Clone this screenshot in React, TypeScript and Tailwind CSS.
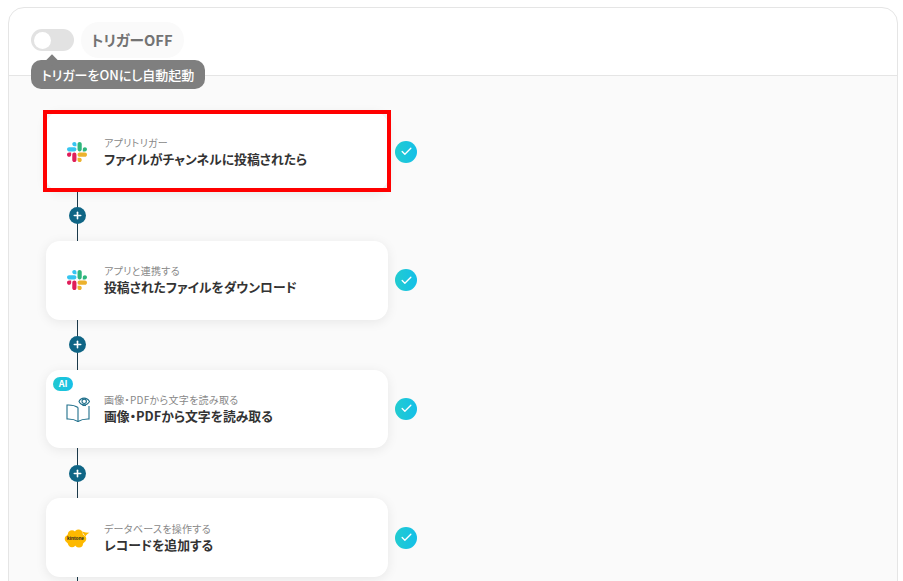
import { Check, Plus } from 'lucide-react'

function SlackLogo() {
    return (
        <svg width="20" height="20" viewBox="0 0 122.8 122.8">
            <path d="M25.8 77.6c0 7.1-5.8 12.9-12.9 12.9S0 84.7 0 77.6s5.8-12.9 12.9-12.9h12.9v12.9zm6.5 0c0-7.1 5.8-12.9 12.9-12.9s12.9 5.8 12.9 12.9v32.3c0 7.1-5.8 12.9-12.9 12.9s-12.9-5.8-12.9-12.9V77.6z" fill="#e01e5a" />
            <path d="M45.2 25.8c-7.1 0-12.9-5.8-12.9-12.9S38.1 0 45.2 0s12.9 5.8 12.9 12.9v12.9H45.2zm0 6.5c7.1 0 12.9 5.8 12.9 12.9s-5.8 12.9-12.9 12.9H12.9C5.8 58.1 0 52.3 0 45.2s5.8-12.9 12.9-12.9h32.3z" fill="#36c5f0" />
            <path d="M97 45.2c0-7.1 5.8-12.9 12.9-12.9s12.9 5.8 12.9 12.9-5.8 12.9-12.9 12.9H97V45.2zm-6.5 0c0 7.1-5.8 12.9-12.9 12.9s-12.9-5.8-12.9-12.9V12.9C64.7 5.8 70.5 0 77.6 0s12.9 5.8 12.9 12.9v32.3z" fill="#2eb67d" />
            <path d="M77.6 97c7.1 0 12.9 5.8 12.9 12.9s-5.8 12.9-12.9 12.9-12.9-5.8-12.9-12.9V97h12.9zm0-6.5c-7.1 0-12.9-5.8-12.9-12.9s5.8-12.9 12.9-12.9h32.3c7.1 0 12.9 5.8 12.9 12.9s-5.8 12.9-12.9 12.9H77.6z" fill="#ecb22e" />
        </svg>
    )
}

function BookLogo() {
    return (
        <svg width="24" height="26" viewBox="0 0 24 26" fill="none" stroke="#1f6f8b" strokeWidth="1.1" className="ml-[2px] shrink-0">
            <path d="M12 11.500C9.500 9.800 5.500 8.800 1 9V23c4-.2 8 .6 11 2.500 3-1.900 7-2.700 11-2.500V10" />
            <path d="M12 11.500V25.500" />
            <path d="M13 5.500c2-4.500 8-4.500 10.500 0-2.500 4.500-8.500 4.500-10.500 0z" />
            <circle cx="18.200" cy="5.300" r="2.200" />
            <path d="M16.500 9.500h3.500" />
        </svg>
    )
}

function KintoneLogo() {
    return (
        <svg width="26" height="22" viewBox="0 0 26 22" className="mt-[2px] shrink-0">
            <g fill="#fdb900">
                <ellipse cx="11.500" cy="11" rx="10.800" ry="6.500" />
                <circle cx="8" cy="6.500" r="4.200" />
                <circle cx="14.500" cy="5.800" r="4.300" />
                <circle cx="8" cy="15" r="4.200" />
                <circle cx="15" cy="15.500" r="4" />
                <path d="M18 3.500c2.500.8 5 1.300 7.500 1.300-2 1-3.500 2.200-4 4z" />
            </g>
            <text x="11.500" y="12.300" textAnchor="middle" fontSize="4.800" fontWeight="700" fill="#222" fontFamily="'Liberation Sans', sans-serif">kintone</text>
        </svg>
    )
}

const steps = [
    { label: 'アプリトリガー', title: 'ファイルがチャンネルに投稿されたら', icon: <SlackLogo />, selected: true },
    { label: 'アプリと連携する', title: '投稿されたファイルをダウンロード', icon: <SlackLogo /> },
    { label: '画像・PDFから文字を読み取る', title: '画像・PDFから文字を読み取る', icon: <BookLogo />, ai: true },
    { label: 'データベースを操作する', title: 'レコードを追加する', icon: <KintoneLogo /> },
]

function Connector() {
    return (
        <div className="ml-[31px] flex h-[50px] w-[1px] items-center justify-center bg-[#1b3a4b]">
            <div className="flex h-[17px] w-[17px] shrink-0 items-center justify-center rounded-full bg-[#0f6585]">
                <Plus size={11} color="#fff" strokeWidth={3.5} />
            </div>
        </div>
    )
}

export default function App() {
    return (
        <div className="h-[581px] overflow-hidden bg-white pl-[8px] pr-[5px] pt-[7px] font-['Noto_Sans_CJK_JP',sans-serif] [font-feature-settings:'palt']">
            <div className="h-[600px] rounded-t-[16px] border border-[#e5e5e5]">
                {/* Header */}
                <div className="relative flex h-[68px] items-start gap-[7px] border-b border-[#e5e5e5] pl-[22px] pt-[14px]">
                    <div className="mt-[7px] flex h-[22px] w-[43px] items-center rounded-full bg-[#e2e2e2] pl-[3px]">
                        <div className="h-[17px] w-[17px] rounded-full bg-white" />
                    </div>
                    <div className="flex h-[36px] items-center rounded-full bg-[#fafafa] pl-[10px] pr-[11px] text-[14.700px] font-bold text-[#737373]">
                        トリガーOFF
                    </div>
                    <div className="absolute left-[22px] top-[52px] flex h-[29px] w-[174px] items-center justify-center rounded-[10px] bg-[#7f7f7f] text-[13px] font-medium text-white">
                        トリガーをONにし自動起動
                        <div className="absolute left-[17px] top-[-4px] h-[8px] w-[8px] rotate-45 bg-[#7f7f7f]" />
                    </div>
                </div>

                {/* Flow */}
                <div className="h-full bg-[#fafafa] pl-[37px] pt-[36.300px]">
                    {steps.map((step, i) => (
                        <div key={step.title}>
                            <div className="flex items-center gap-[7px]">
                                <div className="relative flex h-[78.67px] w-[342px] items-center rounded-[14px] bg-white shadow-[0_2px_12px_rgba(0,0,0,0.08)]">
                                    <div className="ml-[20px] mr-[16px] flex w-[22px] shrink-0 justify-center">{step.icon}</div>
                                    <div className="mt-[-1px] min-w-0">
                                        <p className="text-[10px] leading-[15px] tracking-[0.3px] text-[#888888]">{step.label}</p>
                                        <p className="text-[12.800px] font-bold leading-[18px] text-[#333333]">{step.title}</p>
                                    </div>
                                    {step.ai && (
                                        <span className="absolute left-[7px] top-[7px] flex h-[14px] w-[20px] items-center justify-center rounded-full bg-gradient-to-r from-[#20c8d0] to-[#17c0e8] text-[9px] font-bold text-white">
                                            AI
                                        </span>
                                    )}
                                    {step.selected && (
                                        <div className="absolute -bottom-[1px] -left-[3px] -right-[3px] -top-[2px] border-4 border-[#ff0000]" />
                                    )}
                                </div>
                                <div className="flex h-[22px] w-[22px] items-center justify-center rounded-full bg-gradient-to-r from-[#22ccd0] to-[#15bfe8]">
                                    <Check size={13} color="#fff" strokeWidth={2.5} />
                                </div>
                            </div>
                            {i < steps.length - 1 ? <Connector /> : <div className="ml-[31px] h-[20px] w-[1px] bg-[#1b3a4b]" />}
                        </div>
                    ))}
                </div>
            </div>
        </div>
    )
}
